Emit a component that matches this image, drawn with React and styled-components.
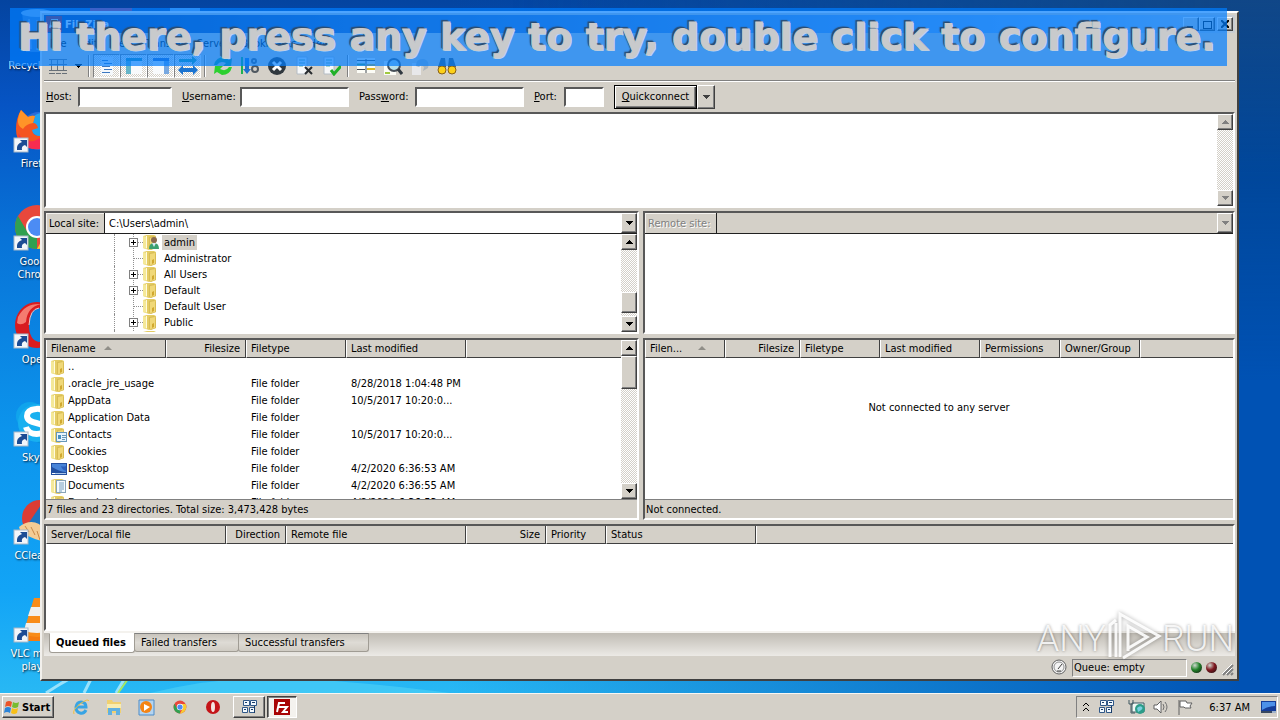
import React from "react";
import styled, { createGlobalStyle, css } from "styled-components";

const face = "#d4d0c8";
const uiFont = `"DejaVu Sans Condensed", Tahoma, sans-serif`;

const GlobalStyle = createGlobalStyle`
  * { box-sizing: border-box; }
  body { margin: 0; font: 11px/13px ${uiFont}; color: #000; overflow: hidden; }
  button, input { font: inherit; color: inherit; border-radius: 0; margin: 0; }
`;

const raised = css`
  border: 1px solid;
  border-color: #fff #404040 #404040 #fff;
  box-shadow: inset -1px -1px 0 #808080;
`;
const sunken = css`
  border: 2px solid;
  border-color: #585858 #fff #fff #585858;
`;

const Screen = styled.div`
  min-height: 100vh;
  display: flex;
  flex-direction: column;
`;
const Desktop = styled.main`
  position: relative;
  flex: 1;
  display: flex;
  overflow: hidden;
  background:
    linear-gradient(90deg, transparent 35%, #0052b4 97%),
    linear-gradient(180deg, #0444a0 0%, #0654c4 15%, #0874d8 35%, #0c94ec 62%, #12a4f6 85%, #28b8f4 100%);
`;
const TopShade = styled.div`
  position: absolute;
  inset: 0;
  background: linear-gradient(180deg, rgba(20, 68, 124, 0.8) 0%, rgba(0, 60, 130, 0.5) 25%, transparent 55%);
  mask-image: linear-gradient(90deg, transparent 40%, #000 95%);
`;
const Streaks = styled.svg`
  position: absolute;
  left: 0;
  bottom: 0;
  width: 500px;
  height: 60px;
`;
const IconColumn = styled.ul`
  position: relative;
  list-style: none;
  margin: 0;
  padding: 7px 0 0;
  width: 74px;
`;
const IconItem = styled.li`
  height: 98px;
  display: flex;
  flex-direction: column;
  align-items: center;
  gap: 4px;
  color: #fff;
  text-align: center;
  text-shadow: 1px 1px 2px #012;
  svg { width: 48px; height: 48px; flex: none; }
  span { width: 70px; }
`;

const Window = styled.section`
  position: absolute;
  inset: 11px 41px 12px 40px;
  display: flex;
  flex-direction: column;
  padding: 2px;
  background: ${face};
  border: 2px solid;
  border-color: #fff #404040 #404040 #f2f0ec;
`;
const TitleBar = styled.header`
  flex: none;
  height: 18px;
  display: flex;
  align-items: center;
  padding: 0 2px;
  color: #fff;
  font-weight: bold;
  background: linear-gradient(90deg, #0a3484, #86b4ec 85%, #c8ccd0);
  h1 { flex: 1; margin: 0 0 0 3px; font-size: 11px; }
`;
const CaptionButton = styled.button`
  width: 16px;
  height: 14px;
  padding: 0;
  display: grid;
  place-items: center;
  background: ${face};
  ${raised}
  &:last-child { margin-left: 2px; }
`;
const MenuBar = styled.nav`
  flex: none;
  height: 20px;
  display: flex;
  align-items: center;
  a { padding: 0 6px; color: #000; text-decoration: none; }
`;
const ToolBar = styled.div`
  flex: none;
  height: 28px;
  display: flex;
  align-items: center;
  padding: 0 0 1px;
  border-bottom: 1px solid #808080;
  box-shadow: 0 1px 0 #fff;
`;
const ToolButton = styled.button`
  width: 27px;
  height: 24px;
  padding: 0;
  display: grid;
  place-items: center;
  background: none;
  border: 0;
  svg { width: 20px; height: 20px; }
  ${(p) => p.$pressed && css`
    background: repeating-conic-gradient(#fff 0 25%, ${face} 0 50%) 0 0 / 2px 2px;
    border: 1px solid;
    border-color: #808080 #fff #fff #808080;
  `}
`;
const ToolArrow = styled(ToolButton)`
  width: 14px;
  svg { width: 8px; height: 4px; }
`;
const ToolSep = styled.span`
  width: 2px;
  height: 22px;
  margin: 0 3px;
  border-left: 1px solid #808080;
  border-right: 1px solid #fff;
`;

const QuickBar = styled.form`
  flex: none;
  height: 31px;
  display: flex;
  align-items: center;
  gap: 10px;
  padding: 0 2px;
`;
const Field = styled.label`
  display: flex;
  align-items: center;
  span { width: ${(p) => p.$label}px; white-space: nowrap; }
  input {
    width: ${(p) => p.$width}px;
    height: 20px;
    padding: 0 3px;
    background: #fff;
    outline: 0;
    ${sunken}
  }
`;
const SplitButton = styled.div`
  display: flex;
  height: 24px;
`;
const ConnectButton = styled.button`
  width: 83px;
  padding: 0;
  background: ${face};
  border: 1px solid #000;
  box-shadow: inset 1px 1px 0 #fff, inset -1px -1px 0 #404040, inset -2px -2px 0 #808080;
`;
const DropButton = styled.button`
  width: ${(p) => p.$width || 16}px;
  padding: 0;
  display: grid;
  place-items: center;
  background: ${face};
  ${raised}
`;

const MessageLog = styled.div`
  flex: none;
  height: 96px;
  display: flex;
  justify-content: flex-end;
  background: #fff;
  ${sunken}
`;

const Split = styled.div`
  display: grid;
  grid-template-columns: 595fr 592fr;
  gap: 4px;
  min-height: 0;
  ${(p) => (p.$grow ? "flex: 1; margin-top: 4px;" : "flex: none; height: 123px; margin-top: 3px;")}
`;
const Pane = styled.section`
  min-width: 0;
  min-height: 0;
  display: flex;
  flex-direction: column;
  background: #fff;
  overflow: hidden;
  ${sunken}
`;
const SiteBar = styled.div`
  flex: none;
  height: 21px;
  display: flex;
  background: ${(p) => (p.$disabled ? face : "#fff")};
  border-bottom: 1px solid #202020;
  label {
    display: flex;
    align-items: center;
    white-space: nowrap;
    padding: 0 0 0 3px;
    width: ${(p) => (p.$disabled ? 72 : 59)}px;
    background: ${face};
    color: ${(p) => (p.$disabled ? "#808080" : "#000")};
    text-shadow: ${(p) => (p.$disabled ? "1px 1px 0 #fff" : "none")};
    border-right: 1px solid #202020;
    box-shadow: inset 1px 1px 0 #f4f2ee;
  }
  input {
    flex: 1;
    min-width: 0;
    border: 0;
    padding: 0 4px;
    background: none;
    outline: 0;
  }
`;
const Row = styled.div`
  flex: 1;
  min-height: 0;
  display: flex;
`;
const Tree = styled.ul`
  flex: 1;
  list-style: none;
  margin: 0;
  padding: 0 0 0 68px;
  overflow: hidden;
  li {
    display: flex;
    align-items: center;
    height: 16px;
    padding-left: 12px;
    border-left: 1px dotted #909090;
  }
  li > svg { flex: none; }
  span { padding: 1px 2px; margin-left: 3px; }
  .selected { background: ${face}; }
`;

const ScrollBox = styled.div`
  flex: none;
  width: 16px;
  display: flex;
  flex-direction: column;
  background: repeating-conic-gradient(#fff 0 25%, ${face} 0 50%) 0 0 / 2px 2px;
  button { flex: none; height: 16px; width: 16px; }
`;
const Track = styled.div`
  flex: 1;
  display: flex;
  flex-direction: column;
  justify-content: ${(p) => (p.$end ? "flex-end" : "flex-start")};
  padding-bottom: ${(p) => (p.$end ? 3 : 0)}px;
`;
const Thumb = styled.div`
  height: ${(p) => p.$size}px;
  background: ${face};
  ${raised}
`;

const Table = styled.table`
  flex: none;
  width: 100%;
  table-layout: fixed;
  border-collapse: separate;
  border-spacing: 0;
  th, td {
    padding: 0 5px;
    text-align: left;
    font-weight: normal;
    white-space: nowrap;
    overflow: hidden;
  }
  th {
    height: 18px;
    padding-left: 4px;
    background: ${face};
    border: 1px solid;
    border-color: #f4f2ee #404040 #404040 #fff;
    border-top-width: 0;
  }
  th:last-child { border-right-width: 0; }
  td { height: 17px; }
  .num { text-align: right; }
`;
const NameCell = styled.span`
  display: flex;
  align-items: center;
  gap: 1px;
  svg { flex: none; }
`;
const Sort = styled.span`
  display: inline-block;
  margin-left: ${(p) => p.$gap}px;
  vertical-align: 2px;
  border: 4px solid transparent;
  border-top: 0;
  border-bottom-color: #908e88;
`;
const ListBody = styled.div`
  flex: 1;
  min-width: 0;
  min-height: 0;
  overflow: hidden;
`;
const EmptyNote = styled.p`
  flex: 1;
  margin: 0;
  padding-top: 43px;
  text-align: center;
`;
const PaneStatus = styled.footer`
  flex: none;
  height: 19px;
  display: flex;
  align-items: center;
  padding: 1px 0 0 1px;
  background: ${face};
  border-top: 1px solid #808080;
`;
const QueuePane = styled(Pane)`
  flex: none;
  height: 107px;
  margin-top: 4px;
`;
const Tabs = styled.div`
  flex: none;
  height: 25px;
  display: flex;
  align-items: flex-start;
  padding-left: 5px;
  border-top: 2px solid #f4f2ee;
  background: linear-gradient(180deg, #c0bcb4, #eceae6);
`;
const Tab = styled.button`
  height: ${(p) => (p.$active ? 20 : 19)}px;
  width: ${(p) => p.$width}px;
  padding: 0 0 0 6px;
  text-align: left;
  white-space: nowrap;
  border: 1px solid #a09c94;
  border-top-color: #808080;
  border-radius: 0 0 3px 3px;
  margin-right: -1px;
  background: linear-gradient(180deg, #c8c4bc, #dedbd5 50%, #d0ccc4);
  ${(p) => p.$active && css`
    padding-bottom: 2px;
    background: #fff;
    border-top-color: #fff;
    font-weight: bold;
  `}
`;
const StatusBar = styled.footer`
  flex: none;
  height: 21px;
  display: flex;
  align-items: center;
  justify-content: flex-end;
  gap: 4px;
  padding-top: 2px;
`;
const StatusBox = styled.span`
  width: 115px;
  height: 18px;
  line-height: 16px;
  padding-left: 1px;
  border: 1px solid;
  border-color: #808080 #fff #fff #808080;
`;
const Led = styled.span`
  width: 11px;
  height: 11px;
  border-radius: 50%;
  background: radial-gradient(circle at 35% 30%, #cfd8cf, ${(p) => p.$color} 45%, #111);
`;

const Banner = styled.div`
  position: absolute;
  inset: 8px 53px auto 10px;
  height: 58px;
  display: flex;
  align-items: center;
  padding: 0 0 0 8px;
  overflow: hidden;
  background: rgba(0, 126, 255, 0.7);
  p {
    margin: 0;
    color: #c8cacc;
    font: bold 38px/44px "DejaVu Sans", Verdana, sans-serif;
    -webkit-text-stroke: 1px #c8cacc;
    white-space: nowrap;
    text-shadow: -1px -1px 0 #2c4c70, -2px -2px 1px #2c4c70, 1px 1px 0 #b4d4f8;
  }
`;
const Watermark = styled.div`
  position: absolute;
  right: 46px;
  bottom: 26px;
  display: flex;
  align-items: center;
  color: rgba(255, 255, 255, 0.85);
  font: 300 36px/56px Roboto, sans-serif;
  text-shadow: 0 0 3px rgba(0, 0, 0, 0.4);
  pointer-events: none;
  svg { filter: drop-shadow(0 0 2px rgba(0, 0, 0, 0.35)); }
`;

const TaskBar = styled.footer`
  flex: none;
  height: 27px;
  display: flex;
  align-items: center;
  padding: 0 2px;
  background: ${face};
  border-top: 1px solid #f8f6f2;
`;
const StartButton = styled.button`
  height: 22px;
  width: 52px;
  padding: 0 1px;
  display: flex;
  align-items: center;
  gap: 1px;
  font-weight: bold;
  background: ${face};
  ${raised}
`;
const Launchers = styled.div`
  display: flex;
  padding: 0 4px 0 10px;
`;
const Launcher = styled.button`
  width: 33px;
  padding: 0;
  height: 22px;
  display: grid;
  place-items: center;
  border: 0;
  background: none;
`;
const TaskButton = styled.button`
  width: 32px;
  height: 22px;
  margin-right: 2px;
  padding: 0;
  display: grid;
  place-items: center;
  background: ${face};
  ${raised}
  ${(p) => p.$active && css`
    width: 30px;
    background: #f4f2ee;
    border-color: #404040 #fff #fff #404040;
    box-shadow: inset 1px 1px 0 #808080;
  `}
`;
const Tray = styled.div`
  margin-left: auto;
  height: 22px;
  width: 202px;
  display: flex;
  align-items: center;
  gap: 8px;
  padding: 0 1px 0 4px;
  border: 1px solid;
  border-color: #808080 #fff #fff #808080;
  time { margin: 0 2px 0 auto; }
  svg { flex: none; }
  svg:nth-of-type(2) { margin-right: 5px; }
`;

const Arrow = ({ up, color = "#000" }) => (
  <svg width="8" height="4" viewBox="0 0 8 4" shapeRendering="crispEdges">
    <path d={up ? "M0 4h8L4 0z" : "M0 0h8L4 4z"} fill={color} />
  </svg>
);

function ScrollBar({ size, end, disabled }) {
  const color = disabled ? "#808080" : "#000";
  return (
    <ScrollBox>
      <DropButton type="button" aria-label="Scroll up" disabled={disabled}><Arrow up color={color} /></DropButton>
      <Track $end={end}>{size && <Thumb $size={size} />}</Track>
      <DropButton type="button" aria-label="Scroll down" disabled={disabled}><Arrow color={color} /></DropButton>
    </ScrollBox>
  );
}

const Folder = ({ kind }) =>
  kind === "desktop" ? (
    <svg width="16" height="16" viewBox="0 0 16 16">
      <rect x="0" y="2" width="16" height="12" fill="#2450a0" />
      <path d="M1 3h14v8q-6 0-14-5z" fill="#4884d8" />
      <path d="M10 5q3 1 5 0v5q-4-1-5-5z" fill="#2c60bc" />
      <path d="M1 12h14v1H1z" fill="#a8c4e8" />
      <path d="M1 12h3v1H1z" fill="#fff" />
    </svg>
  ) : (
    <svg width="16" height="16" viewBox="0 0 16 16">
      <path d="M0 2l4-1h7l2 1v12l-4 1-3 1-6-2z" fill="#e4cc64" />
      <path d="M0 2l4 1v12l-4-1z" fill="#f4e898" />
      <path d="M6 3l5-1 2 2v10l-5 2-2-1z" fill="#d8bc54" />
      <path d="M7 4l5-1v11l-5 1z" fill="#f0d878" />
      <path d="M9 10l2-1v4l-2 1z" fill="#d0a830" />
      <path d="M3.500 2v12" stroke="#fffbe0" />
      {kind === "user" && (
        <g>
          <circle cx="11" cy="6" r="3" fill="#8a6a50" />
          <path d="M6 15q0-6 5-6t5 6z" fill="#3ca070" />
          <path d="M9 9l2 4 2-4z" fill="#d8e8f4" />
        </g>
      )}
      {kind === "contacts" && (
        <g>
          <rect x="5.500" y="5.500" width="10" height="9" fill="#e8f4fc" stroke="#6898b8" />
          <rect x="7" y="8" width="3" height="4" fill="#4890c0" />
          <path d="M11 8.500h4M11 10.500h4M11 12.500h3" stroke="#6898b8" />
        </g>
      )}
      {kind === "documents" && (
        <g>
          <rect x="5.500" y="2.500" width="9" height="12" fill="#f4faff" stroke="#88a4b8" />
          <path d="M8 5h5M8 7h5M8 9h5M8 11h5M8 13h3" stroke="#78a0c0" />
        </g>
      )}
    </svg>
  );

const Expander = ({ open }) => (
  <svg width="16" height="16" viewBox="0 0 16 16" shapeRendering="crispEdges">
    <path d="M6.500 0v16" stroke="#909090" strokeDasharray="1 1" />
    <path d="M7 8.500h9" stroke="#909090" strokeDasharray="1 1" />
    {open && (
      <g>
        <rect x="2.500" y="4.500" width="8" height="8" fill="#fff" stroke="#808080" />
        <path d="M4 8.500h5M6.500 6v5" stroke="#000" />
      </g>
    )}
  </svg>
);

const Shortcut = () => (
  <g>
    <rect x="1" y="33" width="14" height="14" fill="#f2f6fa" stroke="#a8b8c8" />
    <path d="M4 45q-1-6 5-8l-2-2h7v7l-2-2q-4 1-3 5z" fill="#1c4c94" />
  </g>
);

const art = {
  bin: (
    <g>
      <path d="M9 5h30l-4 40H13z" fill="#9cc4ec" opacity=".4" />
      <ellipse cx="24" cy="6" rx="16" ry="4" fill="#8cb8e8" />
      <path d="M16 12l2 30M32 12l-2 30M24 13v30" stroke="#b4d4f4" strokeWidth="2" opacity=".4" />
    </g>
  ),
  firefox: (
    <g>
      <circle cx="26" cy="26" r="19" fill="#2a6cd8" />
      <circle cx="29" cy="20" r="12" fill="#20a4f0" />
      <path d="M8 5l7 7q4-2 7-1l-2 7q4 0 5 5l-6 2q1 6 8 6l12-5 6 2q-4 16-19 16Q3 44 3 24 3 13 8 5z" fill="#f45420" />
      <path d="M8 5l7 7q4-2 7-1l-2 7q-7 1-10 6-6-3-5-10 1-6 3-9z" fill="#ff9428" />
      <path d="M5 28q6 10 16 8l16-8q4 10-10 16Q8 46 5 28z" fill="#f82c50" />
    </g>
  ),
  chrome: (
    <g>
      <circle cx="24" cy="24" r="22" fill="#e8483c" />
      <path d="M24 46A22 22 0 0 1 5 13l10 17 9 5z" fill="#30a050" />
      <path d="M24 46A22 22 0 0 0 43 14H24l9 16z" fill="#f8cc30" />
      <circle cx="24" cy="24" r="11" fill="#fff" />
      <circle cx="24" cy="24" r="9" fill="#4c8cf4" />
    </g>
  ),
  opera: (
    <g>
      <path d="M24 1a22 23 0 1 0 .1 0zM26 7q9 2 9 17t-9 17q-10-2-10-17T26 7z" fill="#d81c20" fillRule="evenodd" />
      <path d="M5 16Q12 2 28 3q-14 3-15 18-5 4-9 1z" fill="#f47c70" />
      <path d="M16 24Q17 8 26 7" fill="none" stroke="#f8c0b8" strokeWidth="1" />
    </g>
  ),
  skype: (
    <g>
      <circle cx="17" cy="17" r="14" fill="#10a4ec" />
      <circle cx="31" cy="31" r="14" fill="#0890dc" />
      <circle cx="24" cy="24" r="19" fill="#18b0f0" />
      <path d="M32 14q-3-5-9-4-9 1-9 7c0 9 18 5 18 13 0 6-16 8-19-2" fill="none" stroke="#fff" strokeWidth="6" />
    </g>
  ),
  cleaner: (
    <g>
      <circle cx="27" cy="21" r="18" fill="#dc3c34" />
      <path d="M28 8l8 4-10 20-11-5z" fill="#1c74c0" />
      <path d="M6 30q10-8 20-3l14 14q-9 5-18 1L8 36z" fill="#f4cc94" />
      <path d="M18 30l4 8M24 34l3 9M12 29l4 6" stroke="#c88848" />
    </g>
  ),
  vlc: (
    <g>
      <path d="M8 36h32l5 10H3z" fill="#f47c10" />
      <path d="M21 3h6l11 36q-14 6-28 0z" fill="#f88c18" />
      <path d="M18 12h12l3 9H15zM13 28h22l2 8q-13 4-26 0z" fill="#f0f0ee" />
    </g>
  ),
  sheet: <path d="M3 1h42v45H3z" fill="#c82048" />,
  page: <path d="M9 1h30v45H9z" fill="#7cb0ec" />,
};

const desktopItems = [
  ["bin", "Recycle Bin", false],
  ["firefox", "Firefox", true],
  ["chrome", "Google Chrome", true],
  ["opera", "Opera", true],
  ["skype", "Skype", true],
  ["cleaner", "CCleaner", true],
  ["vlc", "VLC media player", true],
];

const DesktopIcon = ({ name, label, shortcut }) => (
  <IconItem>
    <svg viewBox="0 0 48 48">
      {art[name]}
      {shortcut && <Shortcut />}
    </svg>
    {label && <span>{label}</span>}
  </IconItem>
);

const Doc = ({ children }) => (
  <g>
    <path d="M3 1h10v17H3z" fill="#f6f8fa" stroke="#b4bcc4" />
    <path d="M5 4h6M5 7h6M5 10h4" stroke="#68b0a0" />
    {children}
  </g>
);

const toolArt = {
  site: <path d="M1 3.500h18M1 8.500h18M1 14.500h18M3.500 3v12M9.500 3v12M15.500 3v12M1 17.500h6M8 17.500h5M14 17.500h5" stroke="#687078" fill="none" />,
  log: <g><path d="M4 1h12v18H4z" fill="#f4f8fc" /><path d="M5 4.500h6M7 7.500h8M5 10.500h8M7 13.500h8M5 16.500h8" stroke="#3c78c0" /></g>,
  localTree: <g><path d="M2 2h16v16H2z" fill="#f8fafc" /><path d="M2 2h16v3H2z" fill="#2890a8" /><path d="M2 5h5v13H2z" fill="#64b4c8" /></g>,
  remoteTree: <g><path d="M2 2h16v16H2z" fill="#f8fafc" /><path d="M2 2h16v3H2z" fill="#3468c0" /><path d="M13 5h5v13h-5z" fill="#78a8e0" /></g>,
  queue: <g><path d="M1 3h13V0l5 4-5 5V6H1z" fill="#30a090" /><path d="M0 14l5-5v3h10V9l5 5-5 5v-3H5v3z" fill="#1c74d0" /></g>,
  refresh: <g><path d="M1 9Q3 1 11 1l5 3 3-2-1 8h-8l3-3q-6-3-9 2z" fill="#1c9c80" /><path d="M19 11q-2 8-10 8l-5-3-3 2 1-8h8l-3 3q6 3 9-2z" fill="#2cd030" /></g>,
  process: <g><path d="M2 1v17" stroke="#20b050" strokeWidth="2" /><path d="M5 2h4v11h2l-4 5-4-5h2V2z" fill="#2070d0" /><circle cx="14" cy="5" r="2" fill="none" stroke="#505860" strokeWidth="2" /><circle cx="15" cy="13" r="3" fill="none" stroke="#505860" strokeWidth="2" /></g>,
  cancel: <g><circle cx="10" cy="10" r="9" fill="#30383e" /><path d="M6 6l8 8M14 6l-8 8" stroke="#fff" strokeWidth="3" /></g>,
  disconnect: <Doc><path d="M11 11l7 7M18 11l-7 7" stroke="#282c30" strokeWidth="2" /></Doc>,
  reconnect: <Doc><path d="M10 14l3 4 7-8" stroke="#20b028" strokeWidth="3" fill="none" /></Doc>,
  filter: <g><path d="M1 2h18v15H1z" fill="#fcfcf6" /><path d="M1 4.500h18M1 13.500h8M10 3v14" stroke="#404850" /><path d="M1 8.500h8" stroke="#40a050" strokeWidth="2" /><path d="M11 9h8M11 13h8" stroke="#e0b820" strokeWidth="2" /></g>,
  compare: <g><path d="M1 5h12v14H1z" fill="#fcfcf6" /><path d="M2 17h5" stroke="#a0c840" strokeWidth="2" /><circle cx="11" cy="9" r="6" fill="#b8e0e8" stroke="#485058" strokeWidth="2" /><path d="M15 13l4 5" stroke="#303840" strokeWidth="3" /></g>,
  sync: <g><path d="M2 7h9v12H2z" fill="#e8e8ea" /><path d="M6 10q0-8 8-7 6 2 4 9l-5 3 1-4q-3-3-5 0z" fill="#acb4bc" /></g>,
  find: <g><path d="M4 2h4l1 9H1zM12 2h4l3 9h-8z" fill="#40505c" /><circle cx="5" cy="14" r="4" fill="#fcd018" stroke="#886018" /><circle cx="15" cy="14" r="4" fill="#fcd018" stroke="#886018" /></g>,
};

const Tool = ({ name, pressed }) => (
  <ToolButton type="button" aria-label={name} $pressed={pressed}>
    <svg viewBox="0 0 20 20">{toolArt[name]}</svg>
  </ToolButton>
);

const treeItems = [
  ["admin", true, "user"],
  ["Administrator", false],
  ["All Users", true],
  ["Default", true],
  ["Default User", false],
  ["Public", true],
  ["", false],
];

const files = [
  ["..", "", ""],
  [".oracle_jre_usage", "File folder", "8/28/2018 1:04:48 PM"],
  ["AppData", "File folder", "10/5/2017 10:20:0..."],
  ["Application Data", "File folder", ""],
  ["Contacts", "File folder", "10/5/2017 10:20:0...", "contacts"],
  ["Cookies", "File folder", ""],
  ["Desktop", "File folder", "4/2/2020 6:36:53 AM", "desktop"],
  ["Documents", "File folder", "4/2/2020 6:36:55 AM", "documents"],
  ["Downloads", "File folder", "4/2/2020 6:36:53 AM"],
];

const Cols = ({ widths }) => (
  <colgroup>
    {widths.map((w, i) => <col key={i} width={w} />)}
    <col />
  </colgroup>
);

const NetIcon = () => (
  <svg width="17" height="16" viewBox="0 0 17 16">
    <g fill="#f4faff" stroke="#305888">
      <path d="M2.500 1.500h6v5h-6zM9.500 1.500h6v5h-6zM1.500 8.500h5v5h-5zM8.500 8.500h5v5h-5z" />
    </g>
    <path d="M4 3.500h2M11 3.500h3M3 10.500h2M10 10.500h2M13.500 7v7" stroke="#183c68" />
  </svg>
);
const ScreenIcon = () => (
  <svg width="16" height="16" viewBox="0 0 16 16">
    <path d="M1 2h15v10H1z" fill="#143c98" />
    <path d="M2 3h13v4q-7 0-13 4z" fill="#4c90e8" />
    <path d="M1 13h12" stroke="#384860" strokeWidth="2" />
    <path d="M12 13h4" stroke="#a0b4cc" strokeWidth="2" />
  </svg>
);

export default function App() {
  return (
    <Screen>
      <GlobalStyle />
      <Desktop>
        <TopShade />
        <Streaks viewBox="0 0 500 60">
          <path d="M46 60Q120 10 240 0M84 60l10-20M116 60l12-20" stroke="#c8f4ff" strokeWidth="3" opacity=".7" fill="none" />
          <path d="M118 60l10-14" stroke="#a8e860" strokeWidth="2" />
          <path d="M150 60q80-20 160-14t140 14z" fill="#58d8f8" opacity=".5" />
        </Streaks>
        <IconColumn>
          {desktopItems.map(([name, label, shortcut]) => (
            <DesktopIcon key={name} name={name} label={label} shortcut={shortcut} />
          ))}
        </IconColumn>
        <IconColumn><DesktopIcon name="sheet" /></IconColumn>
        <IconColumn><DesktopIcon name="page" /></IconColumn>

        <Window>
          <TitleBar>
            <svg width="16" height="16" viewBox="0 0 16 16">
              <path d="M0 0h16v16H0z" fill="#b00808" />
              <path d="M4 12L6 4h6M5 8h4M9 8h4l-4 5h4" stroke="#fff" strokeWidth="2" fill="none" />
            </svg>
            <h1>FileZilla</h1>
            <CaptionButton type="button" aria-label="Minimize"><svg width="8" height="8"><path d="M0 6h6v2H0z" /></svg></CaptionButton>
            <CaptionButton type="button" aria-label="Maximize"><svg width="9" height="9" shapeRendering="crispEdges"><path d="M0 1h9M.5 1v8M8.500 1v8M0 8.500h9" stroke="#000" /></svg></CaptionButton>
            <CaptionButton type="button" aria-label="Close"><svg width="8" height="8"><path d="M0 0l8 8M8 0L0 8" stroke="#000" strokeWidth="2" /></svg></CaptionButton>
          </TitleBar>
          <MenuBar>
            {["File", "Edit", "View", "Transfer", "Server", "Bookmarks", "Help"].map((m) => <a href="#menu" key={m}>{m}</a>)}
          </MenuBar>
          <ToolBar>
            <Tool name="site" />
            <ToolArrow type="button" aria-label="Site list"><Arrow /></ToolArrow>
            <ToolSep />
            {["log", "localTree", "remoteTree", "queue"].map((n) => <Tool key={n} name={n} pressed />)}
            <ToolSep />
            {["refresh", "process", "cancel", "disconnect", "reconnect"].map((n) => <Tool key={n} name={n} />)}
            <ToolSep />
            {["filter", "compare", "sync", "find"].map((n) => <Tool key={n} name={n} />)}
          </ToolBar>
          <QuickBar onSubmit={(e) => e.preventDefault()}>
            <Field $label={32} $width={94}><span><u>H</u>ost:</span><input /></Field>
            <Field $label={58} $width={109}><span><u>U</u>sername:</span><input /></Field>
            <Field $label={56} $width={109}><span>Pass<u>w</u>ord:</span><input type="password" /></Field>
            <Field $label={30} $width={40}><span><u>P</u>ort:</span><input /></Field>
            <SplitButton>
              <ConnectButton><u>Q</u>uickconnect</ConnectButton>
              <DropButton type="button" aria-label="Recent servers" $width={18}><Arrow color="#404040" /></DropButton>
            </SplitButton>
          </QuickBar>
          <MessageLog>
            <ScrollBar disabled />
          </MessageLog>

          <Split>
            <Pane>
              <SiteBar>
                <label htmlFor="local">Local site:</label>
                <input id="local" defaultValue="C:\Users\admin\" />
                <DropButton type="button" aria-label="Local paths"><Arrow /></DropButton>
              </SiteBar>
              <Row>
                <Tree>
                  {treeItems.map(([name, open, kind]) => (
                    <li key={name}>
                      <Expander open={open} />
                      <Folder kind={kind} />
                      {name && <span className={kind && "selected"}>{name}</span>}
                    </li>
                  ))}
                </Tree>
                <ScrollBar size={21} end />
              </Row>
            </Pane>
            <Pane>
              <SiteBar $disabled>
                <label htmlFor="remote">Remote site:</label>
                <input id="remote" disabled />
                <DropButton type="button" aria-label="Remote paths" disabled><Arrow color="#808080" /></DropButton>
              </SiteBar>
            </Pane>
          </Split>

          <Split $grow>
            <Pane>
              <Row>
                <ListBody>
                  <Table>
                    <Cols widths={[120, 80, 100, 120]} />
                    <thead>
                      <tr><th>Filename<Sort $gap={8} /></th><th className="num">Filesize</th><th>Filetype</th><th>Last modified</th><th /></tr>
                    </thead>
                    <tbody>
                      {files.map(([name, type, date, kind]) => (
                        <tr key={name}>
                          <td><NameCell><Folder kind={kind} />{name}</NameCell></td>
                          <td />
                          <td>{type}</td>
                          <td>{date}</td>
                          <td />
                        </tr>
                      ))}
                    </tbody>
                  </Table>
                </ListBody>
                <ScrollBar size={33} />
              </Row>
              <PaneStatus>7 files and 23 directories. Total size: 3,473,428 bytes</PaneStatus>
            </Pane>
            <Pane>
              <Table>
                <Cols widths={[80, 75, 80, 100, 80, 80]} />
                <thead>
                  <tr><th>Filen...<Sort $gap={16} /></th><th className="num">Filesize</th><th>Filetype</th><th>Last modified</th><th>Permissions</th><th>Owner/Group</th><th /></tr>
                </thead>
              </Table>
              <EmptyNote>Not connected to any server</EmptyNote>
              <PaneStatus>Not connected.</PaneStatus>
            </Pane>
          </Split>

          <QueuePane>
            <Table>
              <Cols widths={[180, 60, 180, 80, 60, 150]} />
              <thead>
                <tr><th>Server/Local file</th><th className="num">Direction</th><th>Remote file</th><th className="num">Size</th><th>Priority</th><th>Status</th><th /></tr>
              </thead>
            </Table>
          </QueuePane>
          <Tabs>
            <Tab type="button" $active $width={86}>Queued files</Tab>
            <Tab type="button" $width={105}>Failed transfers</Tab>
            <Tab type="button" $width={131}>Successful transfers</Tab>
          </Tabs>
          <StatusBar>
            <svg width="17" height="17" viewBox="0 0 17 17">
              <circle cx="8" cy="8" r="7" fill="#f4f4f4" stroke="#606060" />
              <circle cx="8" cy="8" r="5" fill="none" stroke="#909090" />
              <path d="M7 10l4-5M6 12h4" stroke="#404040" />
            </svg>
            <StatusBox>Queue: empty</StatusBox>
            <Led $color="#208028" />
            <Led $color="#801820" />
            <svg width="14" height="18" viewBox="4 0 14 18">
              <path d="M6 16L16 6M10 16l6-6M14 16l2-2" stroke="#808080" strokeWidth="2" />
              <path d="M5 15L15 5M9 15l6-6" stroke="#fff" />
            </svg>
          </StatusBar>
        </Window>

        <Watermark>
          ANY
          <svg width="56" height="56" viewBox="0 0 56 56" fill="none" stroke="rgba(255,255,255,.9)" strokeWidth="3">
            <path d="M4 46V14l6-5M10 46V12M14 46V3l39 22-36 22M22 40V15l19 11-20 12" />
          </svg>
          RUN
        </Watermark>
        <Banner><p>Hi there, press any key to try, double click to configure.</p></Banner>
      </Desktop>

      <TaskBar>
        <StartButton type="button">
          <svg width="17" height="17" viewBox="0 0 17 17">
            <path d="M2 3q3-2 6 0L7 8Q4 6 1 8z" fill="#ec5428" />
            <path d="M9 3q3 2 6 0l-1 5q-3 2-6 0z" fill="#78bc30" />
            <path d="M1 9q3-2 6 0l-1 5q-3-2-6 0z" fill="#2c84d8" />
            <path d="M8 9q3 2 6 0l-1 5q-3 2-6 0z" fill="#f8c018" />
          </svg>
          Start
        </StartButton>
        <Launchers>
          <Launcher type="button" aria-label="Internet Explorer">
            <svg width="18" height="18" viewBox="0 0 18 18">
              <path d="M14 12q-2 4-6 3-4-1-4-6 1-5 5-5 5 0 5 5H5" fill="none" stroke="#38a4e4" strokeWidth="3" />
              <path d="M2 16Q0 12 8 6t9-3" fill="none" stroke="#f0c040" strokeWidth="1" />
            </svg>
          </Launcher>
          <Launcher type="button" aria-label="Explorer">
            <svg width="16" height="16" viewBox="0 0 16 16">
              <path d="M1 1h5l1 2h8v11H1z" fill="#f0d070" />
              <path d="M1 5h14v4H1z" fill="#f8ecb0" />
              <path d="M2 16V9h12v7h-4v-4H6v4z" fill="#60b0e0" />
            </svg>
          </Launcher>
          <Launcher type="button" aria-label="Media player">
            <svg width="17" height="17" viewBox="0 0 17 17">
              <path d="M1 1h15v15H1z" fill="#b4d4f0" stroke="#4c8cc8" />
              <circle cx="8" cy="8" r="6" fill="#f48414" />
              <path d="M6 5l6 3-6 4z" fill="#fff" />
            </svg>
          </Launcher>
          <Launcher type="button" aria-label="Chrome"><svg width="14" height="14" viewBox="0 0 48 48">{art.chrome}</svg></Launcher>
          <Launcher type="button" aria-label="Opera browser">
            <svg width="16" height="16" viewBox="0 0 16 16">
              <circle cx="8" cy="8" r="7" fill="#c41418" />
              <ellipse cx="8" cy="8" rx="2" ry="5" fill="#f4e4e0" />
            </svg>
          </Launcher>
        </Launchers>
        <TaskButton type="button" aria-label="Network"><NetIcon /></TaskButton>
        <TaskButton type="button" aria-label="FileZilla" $active>
          <svg width="16" height="16" viewBox="0 0 16 16">
            <path d="M0 0h16v16H0z" fill="#a80404" />
            <path d="M3 13L5 4h6M4 8h5M9 8h4l-4 5h5" stroke="#fff" strokeWidth="2" fill="none" />
          </svg>
        </TaskButton>
        <Tray>
          <svg width="9" height="10" viewBox="0 0 9 10"><path d="M2 4l3-3 3 3M2 9l3-3 3 3" fill="none" stroke="#000" strokeWidth="1" /></svg>
          <NetIcon />
          <svg width="17" height="17" viewBox="0 0 17 17">
            <path d="M4 4h12v9H4z" fill="#f0f8f4" stroke="#405860" />
            <path d="M1 1v4h4V1M3 5v9h4" fill="none" stroke="#405860" />
            <circle cx="12" cy="10" r="5" fill="#2c9c88" />
            <path d="M9 9q3-3 5-1t-4 5z" fill="#78d0e0" />
          </svg>
          <svg width="16" height="16" viewBox="0 0 16 16">
            <path d="M1 6h3l4-4v12l-4-4H1z" fill="#fff" stroke="#606060" />
            <path d="M10 5q2 3 0 6M12 3q4 5 0 10" fill="none" stroke="#707070" />
          </svg>
          <svg width="16" height="16" viewBox="0 0 16 16">
            <path d="M2 1v15" stroke="#606060" />
            <path d="M3 2h6l1 2h5l-2 3 1 2H8L7 8H3z" fill="#fff" stroke="#606060" />
          </svg>
          <time>6:37 AM</time>
          <ScreenIcon />
        </Tray>
      </TaskBar>
    </Screen>
  );
}
